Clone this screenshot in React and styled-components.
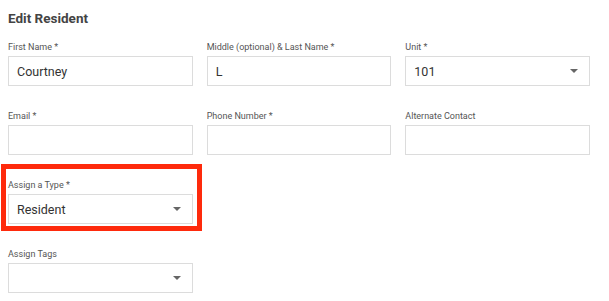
import styled, { createGlobalStyle } from "styled-components";

const GlobalStyle = createGlobalStyle`
  body {
    margin: 0;
    background: #fff;
    font-family: Roboto, "Liberation Sans", Arial, sans-serif;
  }
`;

const fields = [
  { label: "First Name *", value: "Courtney" },
  { label: "Middle (optional) & Last Name *", value: "L" },
  { label: "Unit *", value: "101", select: true },
  { label: "Email *", value: "" },
  { label: "Phone Number *", value: "" },
  { label: "Alternate Contact", value: "" },
  { label: "Assign a Type *", value: "Resident", select: true, highlight: true },
  null,
  null,
  { label: "Assign Tags", value: "", select: true },
];

export default function App() {
  return (
    <>
      <GlobalStyle />
      <Page>
        <Title>Edit Resident</Title>
        <Grid>
          {fields.map((f, i) =>
            f ? (
              <Field key={i} highlight={f.highlight}>
                <Label>{f.label}</Label>
                <Box>
                  <span>{f.value}</span>
                  {f.select && <Caret />}
                </Box>
              </Field>
            ) : (
              <div key={i} />
            )
          )}
        </Grid>
      </Page>
    </>
  );
}

const Page = styled.div`
  padding: 8px 19px 0 8px;
`;

const Title = styled.h2`
  margin: 0;
  font-size: 13.5px;
  font-weight: 700;
  color: #444;
  line-height: 20px;
`;

const Grid = styled.div`
  margin-top: 14px;
  display: grid;
  grid-template-columns: repeat(3, 1fr);
  column-gap: 14px;
  row-gap: 25px;
`;

const Field = styled.div`
  position: relative;
  &::before {
    content: "";
    display: ${({ highlight }) => (highlight ? "block" : "none")};
    position: absolute;
    top: -16px;
    left: -7px;
    right: -9px;
    bottom: -7px;
    border: 5px solid #fe2a0c;
  }
`;

const Label = styled.div`
  font-size: 9px;
  line-height: 11px;
  color: #555;
  margin-bottom: 3px;
`;

const Box = styled.div`
  height: 30px;
  box-sizing: border-box;
  border: 1px solid #dcdcdc;
  display: flex;
  align-items: center;
  justify-content: space-between;
  padding: 0 11px 0 8px;
  font-size: 12.5px;
  color: #333;
`;

const Caret = styled.span`
  width: 0;
  height: 0;
  border-left: 4.5px solid transparent;
  border-right: 4.5px solid transparent;
  border-top: 4.5px solid #666;
`;
